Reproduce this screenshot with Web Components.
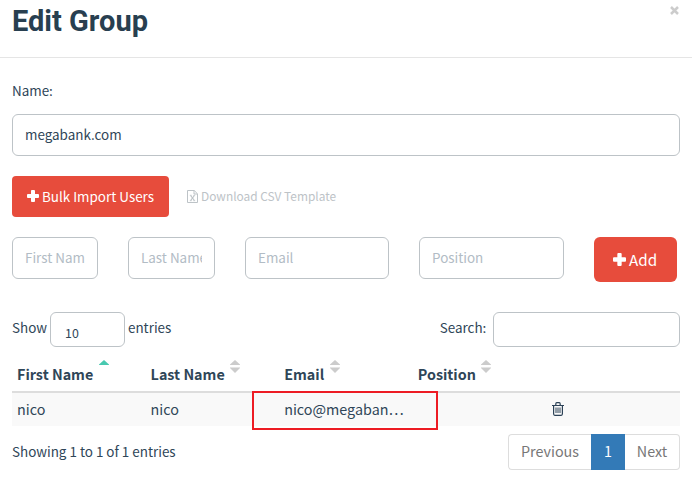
<!DOCTYPE html>
<html lang="en">
<head>
<meta charset="utf-8">
<title>Edit Group</title>
<style>
html, body { margin: 0; background: #fff; }
body { font-family: "Noto Sans CJK SC", "Noto Sans", sans-serif; color: #2f4658; font-size: 13.43px; line-height: 20px; height: 489px; overflow: hidden; }
</style>
</head>
<body>
<group-dialog></group-dialog>
<script>
const define = (name, html, setup) => customElements.define(name, class extends HTMLElement {
  connectedCallback() {
    if (this.shadowRoot) return;
    const t = document.createElement('template');
    t.innerHTML = html;
    this.attachShadow({ mode: 'open' }).append(t.content.cloneNode(true));
    if (setup) setup(this, this.shadowRoot);
  }
});

define('plus-icon', `<style>:host{display:block;width:12px;height:12px}svg{display:block;width:100%;height:100%}</style>
<svg viewBox="0 0 12 12"><path fill="#fff" d="M4.900 0h2.200q.9 0 .9.9V4h3.100q.9 0 .9.9v2.200q0 .9-.9.9H8v3.100q0 .9-.9.9H4.900q-.9 0-.9-.9V8H.9Q0 8 0 7.100V4.900Q0 4 .9 4H4V.9Q4 0 4.900 0z"/></svg>`);

define('excel-icon', `<style>:host{display:block;width:11px;height:13px}svg{display:block}</style>
<svg width="11" height="13" viewBox="0 0 11 13" fill="none" stroke="#bdc3c7"><path d="M.5.5h6.700l3.300 3.300v8.700H.5zM7 .5V4h3.500"/><path stroke-width="1.200" d="M3.600 5.500l3.800 5M7.400 5.500l-3.800 5"/><path stroke-width=".8" d="M2.800 5.300h1.900M6.300 5.300h1.900M2.800 10.700h1.900M6.300 10.700h1.900"/></svg>`);

define('trash-icon', `<style>:host{display:block;width:12px;height:14px}svg{display:block}</style>
<svg width="12" height="14" viewBox="0 0 12 14" fill="none" stroke="#2c4257"><path stroke-width="1.200" d="M0 3.500h12M3.800 3.500V2q0-1.300 1-1.300h2.400q1 0 1 1.300v1.500M1.600 3.500v8.300q0 1.500 1.200 1.500h6.400q1.200 0 1.200-1.500V3.500"/><path d="M4 5.500v5.500M6 5.500v5.500M8 5.500v5.500"/></svg>`);

define('sort-icon', `<style>:host{display:block;width:10px;height:13px;color:#ccc}:host([active]){color:#48c9b0}:host([active]) .down{display:none}svg{display:block}</style>
<svg width="10" height="13" viewBox="0 0 10 13" fill="currentColor"><path d="M5 0l5 4.500V5H0v-.5z"/><path class="down" d="M0 7.500h10V8l-5 5-5-5z"/></svg>`);

define('form-field', `<style>
:host{display:flex;align-items:center;box-sizing:border-box;height:42px;border:1px solid #bdc3c7;border-radius:6px;padding:0 12px 2px;background:#fff}
:host([placeholder]){color:#b2bcc5}
:host([small]){height:35px}
div{flex:1;min-width:0;overflow:hidden;white-space:nowrap}
</style><div><slot></slot></div>`);

define('action-button', `<style>
:host{display:flex;align-items:center;box-sizing:border-box;background:#e74c3c;color:#fff;border-radius:4px;height:41px;padding:0 0 2px 15px;gap:3px;white-space:nowrap}
:host([large]){height:45px;border-radius:6px;padding-left:19px;font-size:15.200px;gap:3px}
plus-icon{margin-top:1px}
:host([large]) plus-icon{width:13px;height:13px}
</style><plus-icon></plus-icon><slot></slot>`);

define('column-head', `<style>:host{display:flex;gap:5.500px;font-weight:700;white-space:nowrap}span{padding-top:4px}</style>
<span><slot></slot></span><sort-icon></sort-icon>`, (host, root) => {
  root.querySelector('sort-icon').toggleAttribute('active', host.hasAttribute('sorted'));
});

define('user-table', `<style>
:host{display:block;font-size:14.330px}
.row{display:grid;grid-template-columns:133.600px 133.600px 133.600px 134.200px 1fr;padding-left:5px;box-sizing:border-box}
.head{height:33px;border-bottom:2px solid #ddd}
.data{height:33px;background:#f9f9f9;align-items:center;position:relative}
.data span{margin-bottom:2px}
trash-icon{margin-bottom:1px}
.mark{position:absolute;left:240px;top:-2px;width:186px;height:39px;box-sizing:border-box;border:2px solid #ed1c24}
</style>
<div class="row head"><column-head sorted>First Name</column-head><column-head>Last Name</column-head><column-head>Email</column-head><column-head>Position</column-head></div>
<div class="row data"><span>nico</span><span>nico</span><span>nico@megaban…</span><span></span><trash-icon></trash-icon><div class="mark"></div></div>`);

define('page-nav', `<style>
:host{display:flex;box-sizing:border-box;width:172px;height:36px;font-size:14.330px;color:#777}
div{box-sizing:border-box;display:flex;align-items:center;justify-content:center;border:1px solid #ddd;padding-bottom:2px}
.p{width:83px;border-radius:4px 0 0 4px;border-right:0}.n{width:55px;border-radius:0 4px 4px 0;border-left:0}
.c{width:34px;background:#337ab7;border-color:#337ab7;color:#fff}
</style><div class="p">Previous</div><div class="c">1</div><div class="n">Next</div>`);

define('dialog-header', `<style>
:host{display:flex;justify-content:space-between;align-items:flex-start;box-sizing:border-box;height:58px;border-bottom:1px solid #e5e5e5;padding:0 12px}
h1{margin:3px 0 0;font:700 29px/36px Roboto,sans-serif;color:#283f50}
svg{margin:6px 1px 0 0}
</style><h1><slot></slot></h1><svg width="9" height="9" viewBox="0 0 9 9"><path d="M1 1l7 7M8 1l-7 7" stroke="#ccc" stroke-width="2.500"/></svg>`);

define('group-dialog', `<style>
:host{display:block}
main{padding:0 12px}
.label{box-sizing:border-box;padding-top:22px;height:56px}
.bar{display:flex;align-items:center}
.import{margin-top:20px}
.import action-button{width:157px}
.link{display:flex;align-items:center;gap:3px;margin-left:18px;color:#bdc3c7;font-size:11.900px}
.link span{margin-bottom:2px}
.link excel-icon{margin-bottom:1px}
.add{margin-top:20px;display:grid;grid-template-columns:86px 87px 144px 145px 83px;gap:30px;align-items:start}
.filter{margin-top:30px;height:35px}
.filter>span{margin-bottom:6px}
.filter .size{width:75px;margin:0 3px;padding:7px 14px 0;font-size:12.400px}
.find{margin-left:auto}
.find+form-field{width:187px;margin-left:6.700px}
user-table{margin-top:13px}
.foot{margin-top:8px;justify-content:space-between}
.foot span{margin-bottom:2px}
</style>
<dialog-header>Edit Group</dialog-header>
<main>
<div class="label">Name:</div>
<form-field>megabank.com</form-field>
<div class="bar import"><action-button>Bulk Import Users</action-button><div class="link"><excel-icon></excel-icon><span>Download CSV Template</span></div></div>
<div class="add"><form-field placeholder>First Name</form-field><form-field placeholder>Last Name</form-field><form-field placeholder>Email</form-field><form-field placeholder>Position</form-field><action-button large>Add</action-button></div>
<div class="bar filter"><span>Show</span><form-field small class="size">10</form-field><span>entries</span><span class="find">Search:</span><form-field small></form-field></div>
<user-table></user-table>
<div class="bar foot"><span>Showing 1 to 1 of 1 entries</span><page-nav></page-nav></div>
</main>`);
</script>
</body>
</html>
